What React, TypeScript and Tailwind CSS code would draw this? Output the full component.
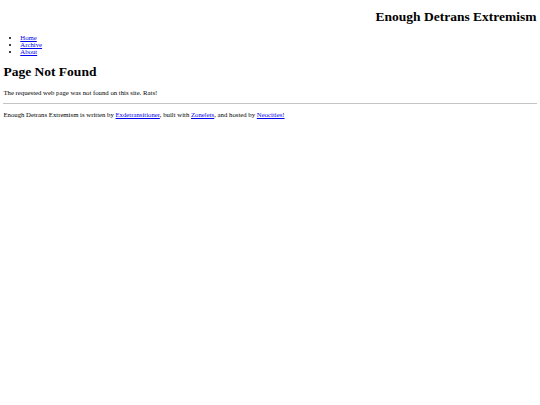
export default function App() {
  return (
    <div className="min-h-[405px] bg-white px-[3.4px] font-['Liberation_Serif',serif] leading-[normal] text-black">
      <header>
        <h1 className="my-[9px] text-right text-[13.5px] font-bold">Enough Detrans Extremism</h1>
        <nav>
          <ul className="my-[6.75px] list-disc pl-[16.9px] text-[6.75px]">
            <li>
              <a href="#" className="text-[#0000ee] underline">Home</a>
            </li>
            <li>
              <a href="#" className="text-[#0000ee] underline">Archive</a>
            </li>
            <li>
              <a href="#" className="text-[#0000ee] underline">About</a>
            </li>
          </ul>
        </nav>
      </header>

      <main>
        <h1 className="my-[9px] text-[13.5px] font-bold">Page Not Found</h1>
        <p className="my-[6.75px] text-[6.75px]">The requested web page was not found on this site. Rats!</p>
      </main>

      <footer>
        <hr className="my-[3.4px] border-t border-b-0 border-[#c4c4c4]" />
        <p className="my-[6.75px] text-[6.75px]">
          Enough Detrans Extremism is written by{" "}
          <a href="#" className="text-[#0000ee] underline">Exdetransitioner</a>, built with{" "}
          <a href="#" className="text-[#0000ee] underline">Zonelets</a>, and hosted by{" "}
          <a href="#" className="text-[#0000ee] underline">Neocities!</a>
        </p>
      </footer>
    </div>
  )
}
